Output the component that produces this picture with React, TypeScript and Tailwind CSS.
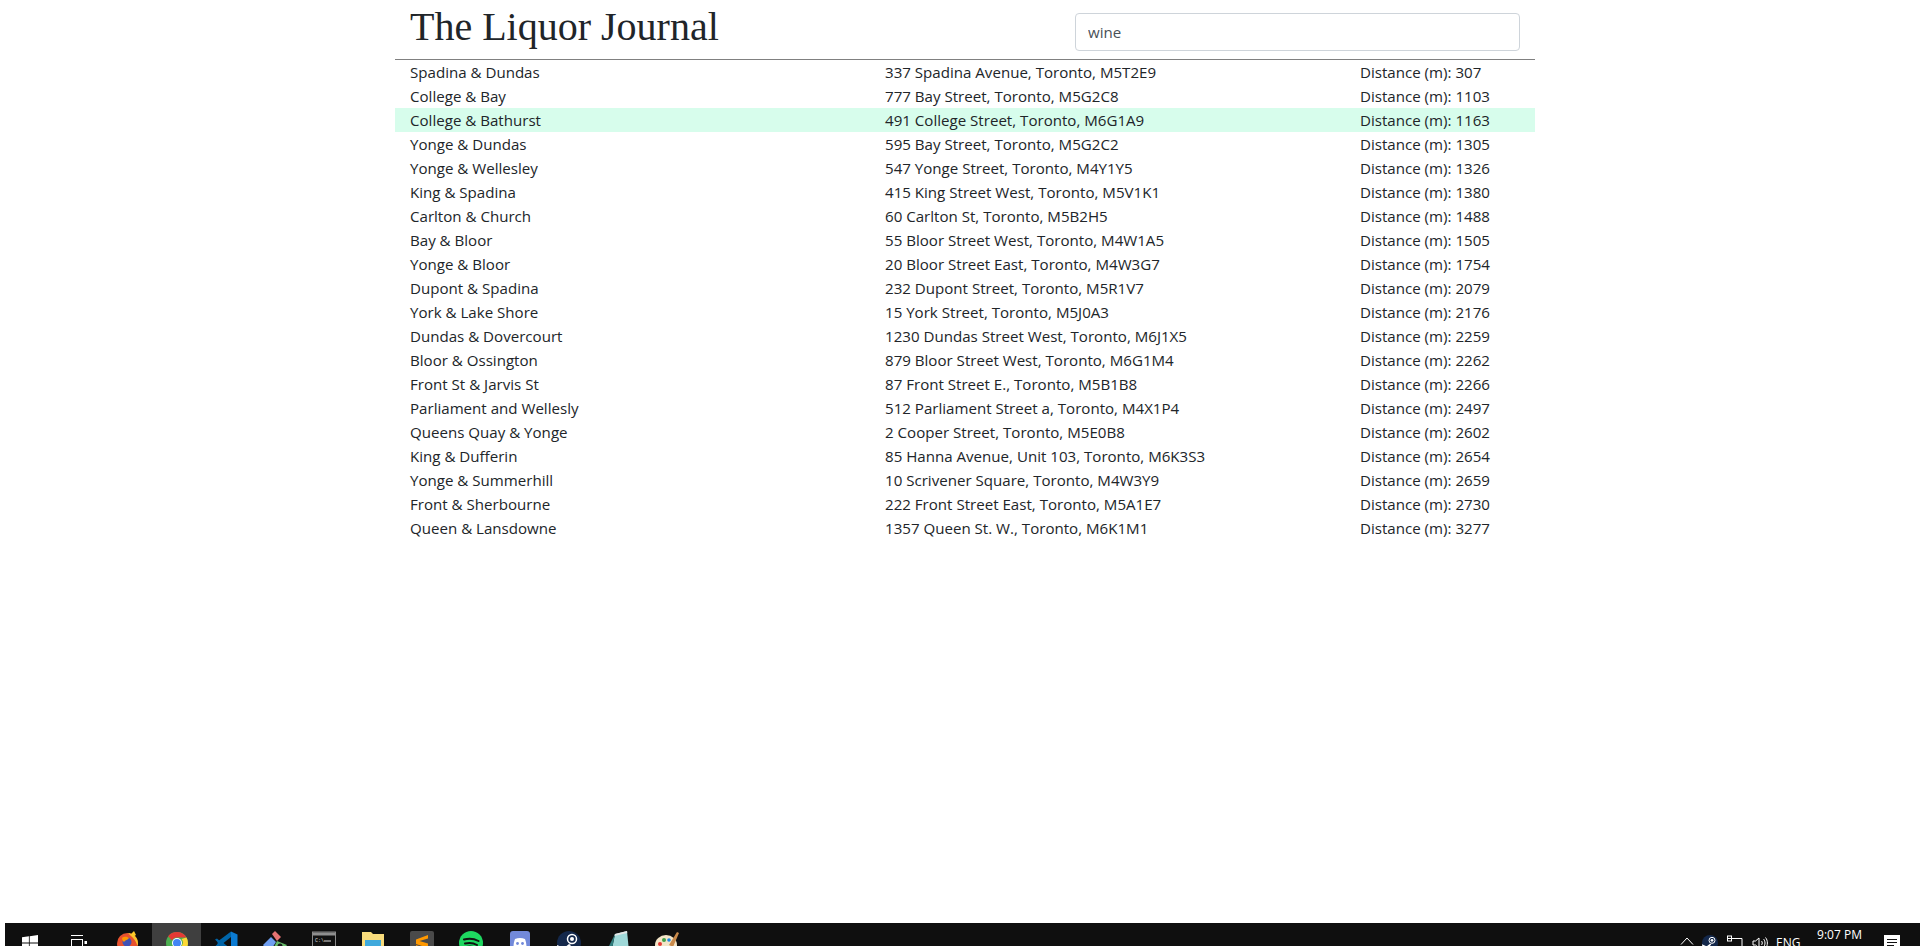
const rows: [string, string, number][] = [
  ["Spadina & Dundas", "337 Spadina Avenue, Toronto, M5T2E9", 307],
  ["College & Bay", "777 Bay Street, Toronto, M5G2C8", 1103],
  ["College & Bathurst", "491 College Street, Toronto, M6G1A9", 1163],
  ["Yonge & Dundas", "595 Bay Street, Toronto, M5G2C2", 1305],
  ["Yonge & Wellesley", "547 Yonge Street, Toronto, M4Y1Y5", 1326],
  ["King & Spadina", "415 King Street West, Toronto, M5V1K1", 1380],
  ["Carlton & Church", "60 Carlton St, Toronto, M5B2H5", 1488],
  ["Bay & Bloor", "55 Bloor Street West, Toronto, M4W1A5", 1505],
  ["Yonge & Bloor", "20 Bloor Street East, Toronto, M4W3G7", 1754],
  ["Dupont & Spadina", "232 Dupont Street, Toronto, M5R1V7", 2079],
  ["York & Lake Shore", "15 York Street, Toronto, M5J0A3", 2176],
  ["Dundas & Dovercourt", "1230 Dundas Street West, Toronto, M6J1X5", 2259],
  ["Bloor & Ossington", "879 Bloor Street West, Toronto, M6G1M4", 2262],
  ["Front St & Jarvis St", "87 Front Street E., Toronto, M5B1B8", 2266],
  ["Parliament and Wellesly", "512 Parliament Street a, Toronto, M4X1P4", 2497],
  ["Queens Quay & Yonge", "2 Cooper Street, Toronto, M5E0B8", 2602],
  ["King & Dufferin", "85 Hanna Avenue, Unit 103, Toronto, M6K3S3", 2654],
  ["Yonge & Summerhill", "10 Scrivener Square, Toronto, M4W3Y9", 2659],
  ["Front & Sherbourne", "222 Front Street East, Toronto, M5A1E7", 2730],
  ["Queen & Lansdowne", "1357 Queen St. W., Toronto, M6K1M1", 3277],
];

const Win = () => (
  <svg width="16" height="16" viewBox="0 0 16 16"><path fill="#fff" d="M0 2.3 6.9 1.3V7.6H0zM7.7 1.2 16 0V7.6H7.7zM0 8.4H6.9V14.7L0 13.7zM7.7 8.4H16V16L7.7 14.8z" /></svg>
);
const TaskView = () => (
  <svg width="16" height="16" viewBox="0 0 16 16" fill="none" stroke="#fff"><rect x="0.5" y="4.5" width="11" height="8" /><path d="M0 .5h12M0 15.5h12" /><rect x="13.5" y="6" width="2.5" height="3" fill="#fff" stroke="none" /></svg>
);
const Firefox = () => (
  <svg width="24" height="24" viewBox="0 0 24 24"><circle cx="11.5" cy="12.5" r="10.5" fill="#e8512e" /><path d="M12 2c5 .5 10 4 10 10 0 1-.2 2-.5 3C20 9 16 6 12 2z" fill="#fbc02d" /><path d="M15 3l3-3 2 4-3 2z" fill="#ffca28" /><circle cx="11" cy="11" r="4.5" fill="#3f51b5" /><path d="M6 7c3-2 5-1 7 0-1 2-4 2-5 4-1-1-2-2-2-4z" fill="#ff9800" /></svg>
);
const Chrome = () => (
  <svg width="24" height="24" viewBox="0 0 24 24"><circle cx="12" cy="12" r="11" fill="#4caf50" /><path d="M12 1a11 11 0 0 1 9.5 5.5H12a5.5 5.5 0 0 0-5 3L3.2 5.2A11 11 0 0 1 12 1z" fill="#e53935" /><path d="M21.5 6.5A11 11 0 0 1 12 23l4.8-8.3A5.5 5.5 0 0 0 16.5 8z" fill="#fdd835" /><circle cx="12" cy="12" r="5" fill="#fff" /><circle cx="12" cy="12" r="4" fill="#4285f4" /></svg>
);
const VSCode = () => (
  <svg width="24" height="24" viewBox="0 0 24 24"><path d="M17 0.5 23.5 3.5V20.5L17 23.5z" fill="#0b7ad1" /><path d="M17 0.5 17 6 7 14 3 11z" fill="#0065a9" /><path d="M17 23.5 17 18 7 10 3 13z" fill="#0065a9" /><path d="M1 8.5 3 7.5 8 12 3 16.5 1 15.5 4.5 12z" fill="#0065a9" /></svg>
);
const Git = () => (
  <svg width="24" height="24" viewBox="0 0 24 24"><path d="M0 14 8 6 13 11 6 22z" fill="#6f9ef0" /><path d="M9 3 12 0 18 6 14 10z" fill="#e57373" /><path d="M14 10 24 14 18 22 11 16z" fill="#66bb6a" /><circle cx="17" cy="15" r="2.5" fill="#1b1b1b" /></svg>
);
const Terminal = () => (
  <svg width="24" height="24" viewBox="0 0 24 24"><rect x="0.5" y="1" width="23" height="22" fill="#111" stroke="#8a8a8a" /><rect x="1" y="1.5" width="22" height="3" fill="#8f8f8f" /><text x="3" y="11" fontSize="5" fill="#ddd" fontFamily="'Liberation Mono', monospace">C:\</text><rect x="12" y="9.5" width="7" height="1" fill="#ddd" /></svg>
);
const Folder = () => (
  <svg width="24" height="24" viewBox="0 0 24 24"><path d="M1 1h9l2 2h11v19H1z" fill="#f9dc7c" /><rect x="4" y="9" width="16" height="11" fill="#3fa9dc" /></svg>
);
const Sublime = () => (
  <svg width="24" height="24" viewBox="0 0 24 24"><rect width="24" height="24" rx="2" fill="#4a4a4a" /><path d="M18 4 6 8.5V13l12 4V12.500L9.500 10 18 7.500zM6 14l8 2.500L6 20z" fill="#ff9800" /></svg>
);
const Spotify = () => (
  <svg width="24" height="24" viewBox="0 0 24 24"><circle cx="12" cy="12" r="12" fill="#1ed760" /><path d="M5 8.500c5-1.500 10-1 14.500 1.500M6 12.500c4-1 8.500-.7 12 1.500M7 16c3.500-.8 7-.5 10 1" fill="none" stroke="#111" strokeWidth="2" strokeLinecap="round" /></svg>
);
const Discord = () => (
  <svg width="20" height="24" viewBox="0 0 20 24"><rect width="20" height="24" rx="3" fill="#7289da" /><path d="M5 8c3-1.500 7-1.500 10 0 1 3 1.500 5 1.500 8-1 .8-2 1.300-3 1.500l-1-1.500h-5l-1 1.500c-1-.2-2-.7-3-1.500 0-3 .5-5 1.500-8z" fill="#fff" /><circle cx="7.500" cy="12.500" r="1.400" fill="#7289da" /><circle cx="12.500" cy="12.500" r="1.400" fill="#7289da" /></svg>
);
const Steam = ({ s = 24 }: { s?: number }) => (
  <svg width={s} height={s} viewBox="0 0 24 24"><circle cx="12" cy="12" r="12" fill="#14284b" /><path d="M0 14l7 3 5-4 2 1-5 6-4 2c-3-2-5-5-5-8z" fill="#fff" /><circle cx="15" cy="8" r="4.500" fill="none" stroke="#fff" strokeWidth="1.500" /><circle cx="15" cy="8" r="2" fill="#fff" /></svg>
);
const Notebook = () => (
  <svg width="24" height="24" viewBox="0 0 24 24"><path d="M9 3 21 0l2 20-18 3z" fill="#9fd8d8" /><path d="M9 3 21 0l.2 2L8 5z" fill="#e4e4e4" /><path d="M9 3 1 19l4 4z" fill="#2f7d7d" /></svg>
);
const Palette = () => (
  <svg width="24" height="24" viewBox="0 0 24 24"><ellipse cx="11" cy="14" rx="11" ry="10" fill="#f3e5c8" /><circle cx="5" cy="13" r="2" fill="#e53935" /><circle cx="9" cy="9" r="2" fill="#43a047" /><circle cx="14" cy="9" r="1.800" fill="#1e88e5" /><circle cx="6" cy="19" r="1.800" fill="#fdd835" /><path d="M14 14 22 1l2 1-6 14z" fill="#c98a4b" /></svg>
);

const apps = [Win, TaskView, Firefox, Chrome, VSCode, Git, Terminal, Folder, Sublime, Spotify, Discord, Steam, Notebook, Palette];

export default function App() {
  return (
    <div className="flex h-screen flex-col overflow-hidden bg-white font-['Open_Sans',sans-serif] text-[15.1px] leading-6 text-[#212529]">
      <main className="ml-[395px] w-[1140px] flex-1">
        <header className="flex h-[59px] items-start">
          <h1 className="w-[680px] pl-[15px] pt-[3px] font-['Liberation_Serif',serif] text-[40px] font-normal leading-[48px]">The Liquor Journal</h1>
          <input
            readOnly
            value="wine"
            className="mt-[13px] h-[38px] w-[445px] rounded border border-[#ced4da] px-3 text-[#495057] outline-none"
          />
        </header>
        <hr className="border-t border-[#808080]" />
        {rows.map(([name, addr, dist]) => (
          <div key={name} className={`flex h-6 px-[15px] ${name === "College & Bathurst" ? "bg-[#d7fdec]" : ""}`}>
            <div className="w-[475px]">{name}</div>
            <div className="w-[475px]">{addr}</div>
            <div>Distance (m): {dist}</div>
          </div>
        ))}
      </main>
      <footer className="ml-[5px] h-[23px] shrink-0 overflow-hidden bg-[#0f0f0f]">
        <div className="flex h-10 items-center text-white">
          {apps.map((Icon, i) => (
            <div key={i} className={`flex h-10 w-[49px] items-center justify-center ${i === 3 ? "bg-[#3f3f3f]" : ""}`}>
              <Icon />
            </div>
          ))}
          <div className="ml-auto flex h-10 items-center">
            <svg width="14" height="8" viewBox="0 0 14 8" fill="none" stroke="#fff" className="mb-[5px] mr-[8px]"><path d="M1 7.500 7 1l6 6.500" /></svg>
            <div className="mr-[9px]"><Steam s={16} /></div>
            <svg width="16" height="16" viewBox="0 0 16 16" fill="none" stroke="#fff" className="mr-[9px]"><path d="M1 3.500h14v10H5" /><rect x="0.500" y="1" width="4" height="5" /></svg>
            <svg width="16" height="16" viewBox="0 0 16 16" fill="none" stroke="#fff" className="mr-[8px]"><path d="M1 6h2.500L7 3v10L3.500 10H1zM9.500 6c1 1 1 3 0 4M11.500 4c2 2 2 6 0 8M13.500 2.500c2.500 3 2.500 8 0 11" /></svg>
            <div className="w-[24px] text-center text-[12px] leading-4">ENG</div>
            <div className="h-8 w-[84px] pr-[5px] text-center text-[12px] leading-4">9:07 PM</div>
            <svg width="16" height="16" viewBox="0 0 16 16" className="mr-[20px]"><path fill="#fff" d="M0 0h16v16H0z" /><path stroke="#111" d="M3 4.500h10M3 7.500h10M3 10.500h7" /></svg>
          </div>
        </div>
      </footer>
    </div>
  );
}
